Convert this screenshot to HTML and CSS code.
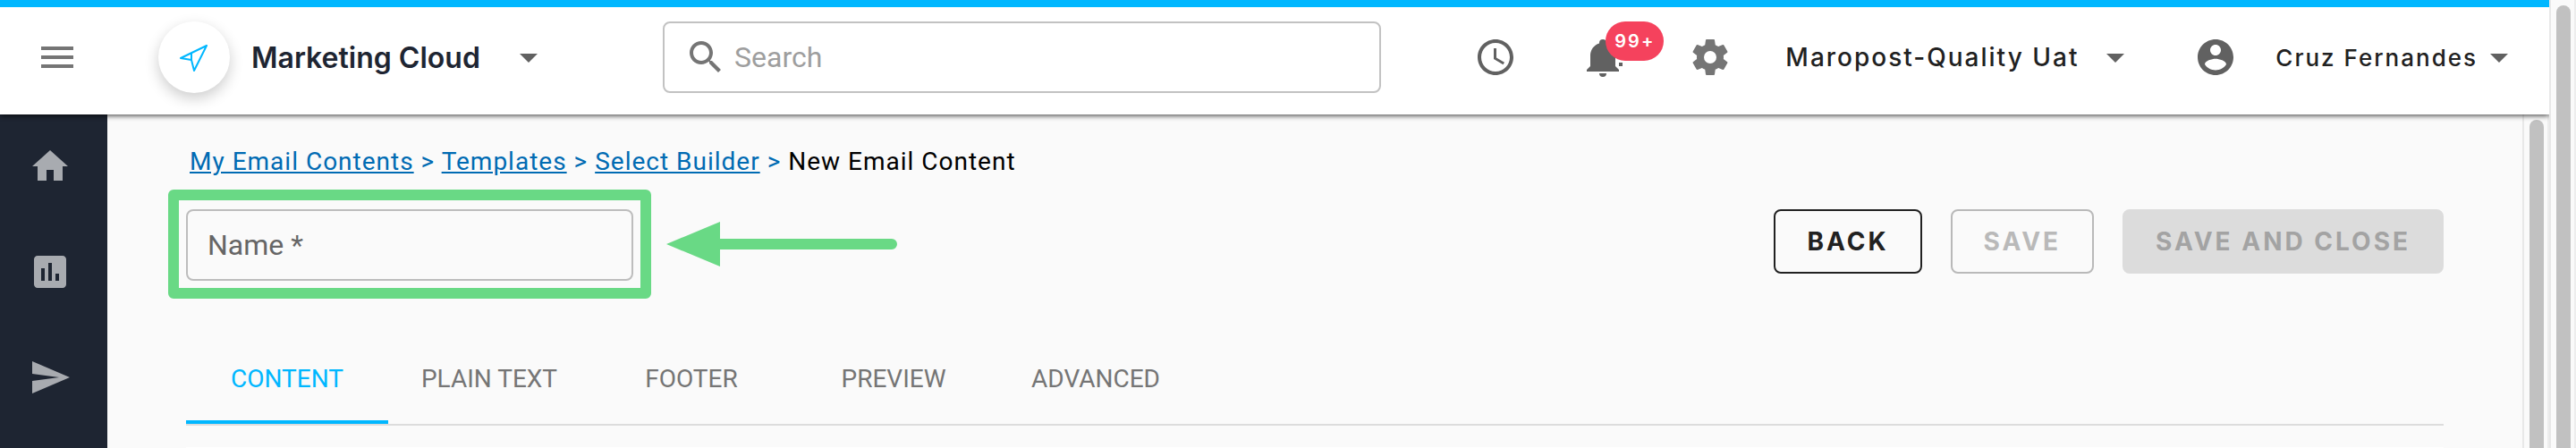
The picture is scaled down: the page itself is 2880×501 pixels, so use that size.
FILE: index.html
```html
<!DOCTYPE html>
<html lang="en">
<head>
  <meta charset="UTF-8">
  <title>New Email Content</title>
  <link rel="stylesheet" href="styles.css">
</head>
<body>

  <div class="app">
    <!-- Top bar -->
    <header class="topbar">
      <div class="topbar-left">
        <button class="icon-btn" aria-label="Menu">
          <svg class="icon" viewBox="0 0 24 24"><path d="M3 18h18v-2H3v2zm0-5h18v-2H3v2zm0-7v2h18V6H3z"/></svg>
        </button>
        <div class="product">
          <span class="product-logo">
            <svg viewBox="0 0 32 32"><path d="M30 3 L1 17 L13 19 L16 31 Z M13 19 V11"/></svg>
          </span>
          <select class="product-select" aria-label="Product">
            <option>Marketing Cloud</option>
          </select>
          <svg class="icon caret" viewBox="0 0 24 24"><path d="M7 10l5 5 5-5z"/></svg>
        </div>
      </div>

      <label class="search">
        <svg class="icon" viewBox="0 0 24 24"><path d="M15.5 14h-.79l-.28-.27C15.41 12.59 16 11.11 16 9.5 16 5.91 13.09 3 9.5 3S3 5.91 3 9.5 5.91 16 9.5 16c1.61 0 3.09-.59 4.23-1.57l.27.28v.79l5 4.99L20.49 19l-4.99-5zm-6 0C7.01 14 5 11.99 5 9.5S7.01 5 9.5 5 14 7.01 14 9.5 11.99 14 9.5 14z"/></svg>
        <input type="search" placeholder="Search" aria-label="Search">
      </label>

      <div class="topbar-right">
        <div class="actions">
          <button class="icon-btn dark" aria-label="History">
            <svg class="icon" viewBox="0 0 24 24"><path d="M11.99 2C6.47 2 2 6.48 2 12s4.47 10 9.99 10C17.52 22 22 17.52 22 12S17.52 2 11.99 2zM12 20c-4.42 0-8-3.58-8-8s3.58-8 8-8 8 3.58 8 8-3.58 8-8 8zm.5-13H11v6l5.25 3.15.75-1.23-4.5-2.67z"/></svg>
          </button>
          <button class="icon-btn dark" aria-label="Notifications">
            <svg class="icon" viewBox="0 0 24 24"><path d="M23 7v6h-2V7M21 15h2v2h-2v-2M21 19v1H3v-1l2-2v-6c0-3.1 2.03-5.83 5-6.71V4a2 2 0 0 1 4 0v.29c2.97.88 5 3.61 5 6.71v6l2 2M14 21a2 2 0 0 1-4 0"/></svg>
            <span class="badge">99+</span>
          </button>
          <button class="icon-btn" aria-label="Settings">
            <svg class="icon" viewBox="0 0 24 24"><path d="M12 15.5A3.5 3.5 0 0 1 8.5 12 3.5 3.5 0 0 1 12 8.5a3.5 3.5 0 0 1 3.5 3.5 3.5 3.5 0 0 1-3.5 3.5m7.43-2.53c.04-.32.07-.64.07-.97s-.03-.66-.07-1l2.11-1.63c.19-.15.24-.42.12-.64l-2-3.46c-.12-.22-.39-.31-.61-.22l-2.49 1c-.52-.39-1.06-.73-1.69-.98l-.37-2.65A.506.506 0 0 0 14 2h-4c-.25 0-.46.18-.5.42l-.37 2.65c-.63.25-1.17.59-1.69.98l-2.49-1c-.22-.09-.49 0-.61.22l-2 3.46c-.13.22-.07.49.12.64L4.57 11c-.04.34-.07.67-.07 1s.03.65.07.97l-2.11 1.66c-.19.15-.25.42-.12.64l2 3.46c.12.22.39.3.61.22l2.49-1.01c.52.4 1.06.74 1.69.99l.37 2.65c.04.24.25.42.5.42h4c.25 0 .46-.18.5-.42l.37-2.65c.63-.26 1.17-.59 1.69-.99l2.49 1.01c.22.08.49 0 .61-.22l2-3.46c.12-.22.07-.49-.12-.64l-2.11-1.66z"/></svg>
          </button>
        </div>
        <div class="account">
          <select class="account-select" aria-label="Account">
            <option>Maropost-Quality Uat</option>
          </select>
          <svg class="icon caret" viewBox="0 0 24 24"><path d="M7 10l5 5 5-5z"/></svg>
        </div>
        <button class="user">
          <svg class="icon" viewBox="0 0 24 24"><path d="M12 2C6.48 2 2 6.48 2 12s4.48 10 10 10 10-4.48 10-10S17.52 2 12 2zm0 3c1.66 0 3 1.34 3 3s-1.34 3-3 3-3-1.34-3-3 1.34-3 3-3zm0 14.2c-2.5 0-4.71-1.28-6-3.22.03-1.99 4-3.08 6-3.08 1.99 0 5.97 1.09 6 3.08-1.29 1.94-3.5 3.22-6 3.22z"/></svg>
          <span class="user-name">Cruz Fernandes</span>
          <svg class="icon caret" viewBox="0 0 24 24"><path d="M7 10l5 5 5-5z"/></svg>
        </button>
      </div>
    </header>

    <div class="body">
      <nav class="sidebar">
        <a href="#" aria-label="Home">
          <svg class="icon" viewBox="0 0 24 24"><path d="M10 20v-6h4v6h5v-8h3L12 3 2 12h3v8z"/></svg>
        </a>
        <a href="#" aria-label="Reports">
          <svg class="icon" viewBox="0 0 24 24"><path d="M19 3H5c-1.1 0-2 .9-2 2v14c0 1.1.9 2 2 2h14c1.1 0 2-.9 2-2V5c0-1.1-.9-2-2-2zM9 17H7v-7h2v7zm4 0h-2V7h2v10zm4 0h-2v-4h2v4z"/></svg>
        </a>
        <a href="#" aria-label="Campaigns">
          <svg class="icon" viewBox="0 0 24 24"><path d="M2 21L23 12 2 3v7l15 2-15 2z"/></svg>
        </a>
      </nav>

      <main class="content">
        <nav class="breadcrumbs">
          <a href="#">My Email Contents</a> &gt;
          <a href="#">Templates</a> &gt;
          <a href="#">Select Builder</a> &gt;
          <span class="current">New Email Content</span>
        </nav>

        <div class="form-row">
          <div class="field">
            <input type="text" id="name" required>
            <label for="name">Name *</label>
            <!-- highlight and arrow over the name field -->
            <div class="highlight"></div>
            <svg class="arrow" viewBox="0 0 258 50"><path d="M0 25 L60 0 V19 H252 A6 6 0 0 1 252 31 H60 V50 Z"/></svg>
          </div>
          <div class="buttons">
            <button class="btn">BACK</button>
            <button class="btn" disabled>SAVE</button>
            <button class="btn btn-filled" disabled>SAVE AND CLOSE</button>
          </div>
        </div>

        <div class="tabs" role="tablist">
          <button class="tab active" role="tab">CONTENT</button>
          <button class="tab" role="tab">PLAIN TEXT</button>
          <button class="tab" role="tab">FOOTER</button>
          <button class="tab" role="tab">PREVIEW</button>
          <button class="tab" role="tab">ADVANCED</button>
        </div>
        <div class="panel"></div>
      </main>

      <div class="scrollbar"><div class="thumb"></div></div>
    </div>
  </div>

  <div class="scrollbar"><div class="thumb"></div></div>

</body>
</html>
```

FILE: styles.css
```css
* {
  box-sizing: border-box;
}

body {
  display: flex;
  height: 100vh;
  margin: 0;
  font-family: Roboto, sans-serif;
  font-size: 28px;
  background: #fafafa;
}

button, input, select {
  margin: 0;
  padding: 0;
  border: none;
  background: none;
  font: inherit;
  letter-spacing: inherit;
  color: inherit;
}

button {
  cursor: pointer;
}

.icon {
  display: block;
  flex: none;
  width: 48px;
  height: 48px;
  fill: currentColor;
}

.app {
  display: flex;
  flex-direction: column;
  flex: 1;
  min-width: 0;
}

/* Top bar */
.topbar {
  position: relative;
  z-index: 2;
  display: flex;
  align-items: center;
  flex: none;
  height: 128px;
  padding: 0 32px 8px 40px;
  border-top: 8px solid #00b7ff;
  background: white;
  box-shadow: 0 1px 6px rgba(0,0,0,0.8);
  clip-path: inset(0 0 -8px 0);
  font-family: Inter, sans-serif;
}

.topbar-left {
  display: flex;
  align-items: center;
  flex: 0 0 701px;
}

.icon-btn {
  position: relative;
  color: #757575;
}

.icon-btn.dark {
  color: #616161;
}

.product {
  display: flex;
  align-items: center;
  margin-left: 89px;
}

.product-logo {
  display: flex;
  align-items: center;
  justify-content: center;
  width: 80px;
  height: 80px;
  border-radius: 50%;
  background: white;
  box-shadow: 0 6px 16px rgba(0,0,0,0.2);
}

.product-logo svg {
  width: 32px;
  height: 32px;
  fill: none;
  stroke: #00b7ff;
  stroke-width: 2;
  stroke-linejoin: round;
}

.product-select, .account-select {
  appearance: none;
  cursor: pointer;
}

.product-select {
  margin: 0 30px 0 24px;
  font-size: 32px;
  font-weight: 600;
  color: #1e2532;
}

.caret {
  color: #616161;
  pointer-events: none;
}

.search {
  display: flex;
  align-items: center;
  flex: 0 1 803px;
  height: 80px;
  padding: 0 22px;
  border: 2px solid #c2c2c2;
  border-radius: 8px;
  color: #757575;
  font-family: Roboto, sans-serif;
  font-size: 32px;
}

.search input {
  flex: 1;
  min-width: 0;
  margin-left: 8px;
  outline: none;
}

.search input::placeholder {
  color: #9e9e9e;
}

.topbar-right {
  display: flex;
  align-items: center;
  margin-left: auto;
}

.actions {
  display: flex;
  gap: 72px;
  margin-right: 60px;
}

.badge {
  position: absolute;
  top: -16px;
  left: 27px;
  width: 65px;
  height: 44px;
  border-radius: 22px;
  background: #f5425d;
  color: white;
  font-size: 20px;
  font-weight: 600;
  line-height: 44px;
  letter-spacing: 2px;
}

.account {
  display: flex;
  align-items: center;
  gap: 16px;
  font-weight: 500;
  letter-spacing: 2px;
  color: #212121;
}

.user {
  display: flex;
  align-items: center;
  margin-left: 64px;
  font-size: 26px;
  font-weight: 500;
  letter-spacing: 2px;
  color: #616161;
}

.user-name {
  margin-left: 43px;
  color: #212121;
}

/* Sidebar */
.body {
  display: flex;
  flex: 1;
  min-height: 0;
}

.sidebar {
  display: flex;
  flex-direction: column;
  align-items: center;
  gap: 70px;
  flex: none;
  width: 120px;
  padding: 34px 8px 0 0;
  background: #1e2532;
}

.sidebar a {
  color: #a8abb0;
}

/* Page content */
.content {
  display: flex;
  flex-direction: column;
  flex: 1;
  min-width: 0;
  padding: 34px 88px 0;
}

.breadcrumbs {
  height: 72px;
  padding-left: 4px;
  line-height: 38px;
  letter-spacing: 1px;
  color: #006bb3;
}

.breadcrumbs a {
  color: inherit;
}

.breadcrumbs .current {
  color: black;
}

.form-row {
  display: flex;
  justify-content: space-between;
  align-items: flex-start;
}

.field {
  position: relative;
  width: 500px;
  height: 80px;
  font-size: 32px;
}

.field input {
  width: 100%;
  height: 100%;
  padding: 0 24px;
  border: 2px solid #bdbdbd;
  border-radius: 8px;
}

.field label {
  position: absolute;
  top: 0;
  left: 24px;
  line-height: 80px;
  color: #666;
}

.highlight {
  position: absolute;
  inset: -22px -20px -20px;
  border: 12px solid #69d985;
  border-radius: 6px;
  pointer-events: none;
}

.arrow {
  position: absolute;
  top: 14px;
  left: 537px;
  width: 258px;
  height: 50px;
  fill: #69d985;
}

.buttons {
  display: flex;
  gap: 32px;
}

.btn {
  height: 72px;
  padding: 0 35px;
  border: 2px solid #212121;
  border-radius: 8px;
  font-family: Inter, sans-serif;
  font-weight: 700;
  letter-spacing: 3px;
  color: #212121;
}

.btn:disabled {
  border-color: #b9b9b9;
  color: #b9b9b9;
  cursor: default;
}

.btn-filled:disabled {
  border-color: #dcdcdc;
  background: #dcdcdc;
  color: #a3a3a3;
}

/* Tabs */
.tabs {
  display: flex;
  margin-top: 66px;
  border-bottom: 2px solid #dcdcdc;
}

.tab {
  width: 226px;
  height: 94px;
  padding-bottom: 4px;
  border-bottom: 4px solid transparent;
  color: #757575;
}

.tab.active {
  border-color: #00b7ff;
  color: #00b7ff;
}

.panel {
  flex: 1;
  margin-top: 24px;
  background: white;
}

/* Scrollbars */
.scrollbar {
  flex: none;
  width: 30px;
  padding: 6px 6px 0;
  border-left: 2px solid #e8e8e8;
  border-right: 2px solid #ededed;
  background: #fafafa;
}

.thumb {
  width: 16px;
  height: 100%;
  border-radius: 8px 8px 0 0;
  background: #c1c1c1;
}
```
